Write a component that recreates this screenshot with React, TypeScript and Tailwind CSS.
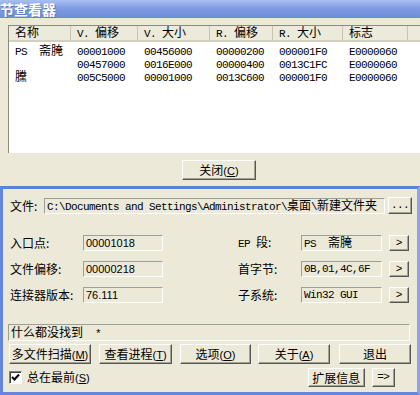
import React from 'react';

const CJK = /([\u2E80-\u9FFF\uF900-\uFAFF\uFF00-\uFFEF]+)/;

// mixed SimSun-like text: latin at 6px per char, CJK at 12px
function Mono({ text }: { text: string }) {
    const parts = text.split(CJK).filter(Boolean);
    return (
        <span className="font-['Liberation_Mono',monospace] text-[11px] tracking-[-0.6px] whitespace-pre leading-none">
            {parts.map((p, i) =>
                CJK.test(p) ? (
                    <span key={i} className="font-['Noto_Sans_CJK_SC',sans-serif] text-[12px] tracking-normal leading-none">{p}</span>
                ) : (
                    <span key={i}>{p}</span>
                )
            )}
        </span>
    );
}

const cols = [
    { title: 'Name', label: '名称', w: 'w-[62px]' },
    { title: 'VOff', label: 'V. 偏移', w: 'w-[67px]' },
    { title: 'VSize', label: 'V. 大小', w: 'w-[72px]' },
    { title: 'ROff', label: 'R. 偏移', w: 'w-[63px]' },
    { title: 'RSize', label: 'R. 大小', w: 'w-[70px]' },
    { title: 'Flags', label: '标志', w: 'w-[65px]' },
];

const rows = [
    ['PS  斋腌', '00001000', '00456000', '00000200', '000001F0', 'E0000060'],
    ['', '00457000', '0016E000', '00000400', '0013C1FC', 'E0000060'],
    ['黱', '005C5000', '00001000', '0013C600', '000001F0', 'E0000060'],
];

const btn =
    'flex items-center justify-center bg-[#ece9d8] border border-t-white border-l-white border-r-[#555] border-b-[#555] shadow-[inset_-1px_-1px_#a5a293] leading-none';
const field =
    'flex items-center h-[16px] pl-[2px] border border-t-[#9d9d9d] border-l-[#9d9d9d] border-b-white border-r-white leading-none';

function Btn({ className, children }: { className: string; children: React.ReactNode }) {
    return <div className={`${btn} ${className}`}>{children}</div>;
}

function Acc({ label, k }: { label: string; k: string }) {
    return (
        <span className="leading-none">
            {label}
            <span className="font-['Liberation_Sans',sans-serif] text-[11px]">
                (<span className="underline">{k}</span>)
            </span>
        </span>
    );
}

export default function App() {
    return (
        <div className="w-[420px] h-[395px] overflow-hidden flex flex-col bg-[#ece9d8] font-['Noto_Sans_CJK_SC',sans-serif] text-[12px] text-black">
            {/* top window */}
            <div className="h-[18px] shrink-0 bg-linear-to-b from-[#a9c0f0] via-[#7e9ae2] to-[#6f8cdb] text-white font-bold text-[14px] leading-[18px] [text-shadow:1px_1px_#5a74c0]">
                节查看器
            </div>
            <div className="mt-[7px] ml-[8px] w-[420px] h-[128px] shrink-0 bg-white border-l border-t border-[#8c8a80]">
                <div className="flex h-[16px] bg-[#ebeadb] border-b-[2px] border-[#d3cfbf]">
                    {cols.map((c) => (
                        <div key={c.title} className={`${c.w} shrink-0 pl-[6px] flex items-center border-r border-[#c7c5b2] leading-none`}>
                            <Mono text={c.label} />
                        </div>
                    ))}
                    <div className="flex-1" />
                </div>
                <div className="pt-[2px]">
                    {rows.map((r, i) => (
                        <div key={i} className="flex h-[13px] items-center leading-none">
                            {r.map((v, j) => (
                                <div key={j} className={`${cols[j].w} shrink-0 pl-[6px]`}>
                                    <Mono text={v} />
                                </div>
                            ))}
                        </div>
                    ))}
                </div>
            </div>
            <Btn className="mt-[7px] ml-[182px] w-[74px] h-[20px] shrink-0">
                <Acc label="关闭" k="C" />
            </Btn>

            {/* lower window */}
            <div className="mt-[6px] flex-1 flex flex-col border-t-[3px] border-l-[3px] border-b-[3px] border-r-[3px] border-t-[#5f7fdc] border-l-[#6686de] border-b-[#6686de] border-r-[#8ea6e8]">
                <div className="mt-[8px] flex items-center h-[17px]">
                    <span className="ml-[7px] w-[34px] leading-none">文件:</span>
                    <div className={`${field} w-[341px]`}>
                        <Mono text="C:\Documents and Settings\Administrator\桌面\新建文件夹" />
                    </div>
                    <Btn className="ml-[3px] w-[24px] h-[17px]">
                        <span className="font-['Liberation_Mono',monospace] text-[11px] tracking-[-0.6px]">...</span>
                    </Btn>
                </div>

                <div className="mt-[21px] flex flex-col gap-[10px]">
                    {[
                        ['入口点:', '00001018', 'EP', '段:', 'PS  斋腌'],
                        ['文件偏移:', '00000218', '', '首字节:', '0B,01,4C,6F'],
                        ['连接器版本:', '76.111', '', '子系统:', 'Win32 GUI'],
                    ].map(([l1, v1, pre, l2, v2]) => (
                        <div key={l1} className="flex items-center h-[16px]">
                            <span className="ml-[7px] w-[73px] leading-none">{l1}</span>
                            <div className={`${field} w-[80px] font-['Liberation_Sans',sans-serif] text-[11px]`}>{v1}</div>
                            <span className="ml-[75px] w-[63px] leading-none">
                                {pre && <Mono text={pre + ' '} />}
                                {l2}
                            </span>
                            <div className={`${field} w-[81px]`}>
                                <Mono text={v2} />
                            </div>
                            <Btn className="ml-[7px] w-[20px] h-[16px]">
                                <span className="font-['Liberation_Mono',monospace] text-[11px]">&gt;</span>
                            </Btn>
                        </div>
                    ))}
                </div>

                <div className={`${field} mt-[21px] ml-[5px] w-[402px] h-[17px]`}>
                    <Mono text="什么都没找到  *" />
                </div>

                <div className="mt-[3px] ml-[6px] flex h-[20px]">
                    <Btn className="w-[82px]"><Acc label="多文件扫描" k="M" /></Btn>
                    <Btn className="ml-[8px] w-[73px]"><Acc label="查看进程" k="T" /></Btn>
                    <Btn className="ml-[8px] w-[71px]"><Acc label="选项" k="O" /></Btn>
                    <Btn className="ml-[7px] w-[72px]"><Acc label="关于" k="A" /></Btn>
                    <Btn className="ml-[9px] w-[72px]">退出</Btn>
                </div>

                <div className="mt-[4px] flex items-center h-[19px]">
                    <div className="ml-[6px] w-[13px] h-[13px] bg-white border border-t-[#808080] border-l-[#808080] border-b-white border-r-white shadow-[inset_1px_1px_#404040] flex items-center justify-center">
                        <svg width="9" height="9" viewBox="0 0 9 9">
                            <path d="M1 4 L3.5 6.5 L8 1.5" stroke="#000" strokeWidth="2" fill="none" />
                        </svg>
                    </div>
                    <span className="ml-[5px] leading-none"><Acc label="总在最前" k="S" /></span>
                    <Btn className="ml-[218px] w-[57px] h-[19px]">扩展信息</Btn>
                    <Btn className="ml-[7px] w-[23px] h-[19px]">
                        <span className="font-['Liberation_Mono',monospace] text-[11px] tracking-[-0.6px]">=&gt;</span>
                    </Btn>
                </div>
            </div>
        </div>
    );
}
